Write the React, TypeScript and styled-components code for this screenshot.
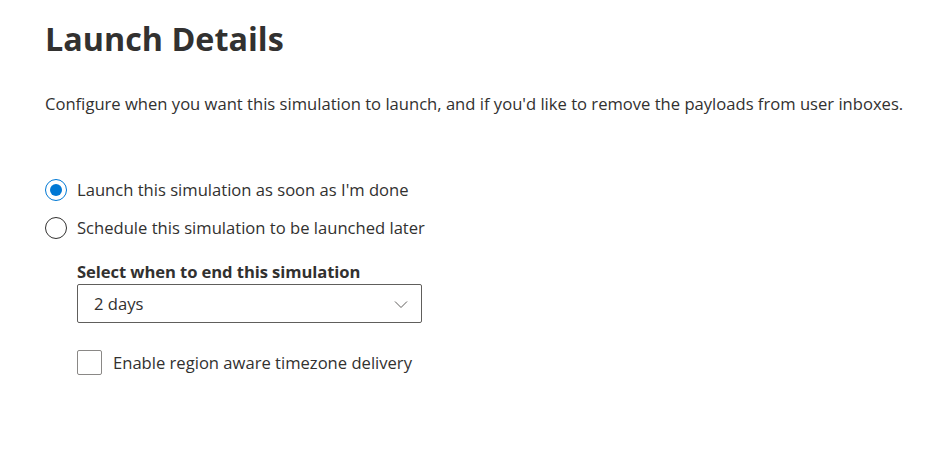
import React from "react";
import styled, { createGlobalStyle } from "styled-components";

const Global = createGlobalStyle`
  html, body { margin: 0; padding: 0; background: #ffffff; }
  body { font-family: "Open Sans", "Noto Sans", sans-serif; color: #323130; }
`;

const Page = styled.div`
  padding: 14px 0 0 45px;
  display: flex;
  flex-direction: column;
`;

const Title = styled.h1`
  margin: 0;
  font-size: 32.3px;
  font-weight: 700;
  line-height: 48px;
  color: #323130;
`;

const Description = styled.p`
  margin: 31px 0 0 0;
  font-size: 16.6px;
  line-height: 22px;
`;

const Options = styled.div`
  margin-top: 64px;
  display: flex;
  flex-direction: column;
  gap: 16px;
`;

const RadioRow = styled.label`
  display: flex;
  align-items: center;
  gap: 10px;
  font-size: 16.6px;
  line-height: 22px;
`;

const RadioCircle = styled.span<{ $checked?: boolean }>`
  box-sizing: border-box;
  width: 22px;
  height: 22px;
  border-radius: 50%;
  border: 1px solid ${(p) => (p.$checked ? "#0078d4" : "#323130")};
  display: flex;
  align-items: center;
  justify-content: center;
  &::after {
    content: "";
    width: 12px;
    height: 12px;
    border-radius: 50%;
    background: ${(p) => (p.$checked ? "#0078d4" : "transparent")};
  }
`;

const Nested = styled.div`
  margin: 22px 0 0 32px;
  display: flex;
  flex-direction: column;
`;

const FieldLabel = styled.div`
  font-size: 16.6px;
  font-weight: 700;
  line-height: 22px;
  letter-spacing: -0.08px;
`;

const Dropdown = styled.div`
  box-sizing: border-box;
  margin-top: 1px;
  width: 345px;
  height: 39px;
  border: 1px solid #605e5c;
  border-radius: 2px;
  display: flex;
  align-items: center;
  justify-content: space-between;
  padding: 0 12px 0 16px;
  font-size: 16.6px;
`;

const CheckRow = styled.label`
  margin-top: 27px;
  display: flex;
  align-items: center;
  gap: 11px;
  font-size: 16.6px;
  line-height: 22px;
`;

const CheckBox = styled.span`
  box-sizing: border-box;
  width: 25px;
  height: 25px;
  border: 1px solid #8a8886;
  border-radius: 2px;
`;

const Chevron = () => (
  <svg width="16" height="16" viewBox="0 0 16 16" fill="none">
    <path d="M2 5.5 L8 11.5 L14 5.5" stroke="#605e5c" strokeWidth="1" />
  </svg>
);

export default function App() {
  return (
    <>
      <Global />
      <Page>
        <Title>Launch Details</Title>
        <Description>
          Configure when you want this simulation to launch, and if you'd like to remove the payloads from user inboxes.
        </Description>
        <Options>
          <RadioRow>
            <RadioCircle $checked />
            Launch this simulation as soon as I'm done
          </RadioRow>
          <RadioRow>
            <RadioCircle />
            Schedule this simulation to be launched later
          </RadioRow>
        </Options>
        <Nested>
          <FieldLabel>Select when to end this simulation</FieldLabel>
          <Dropdown>
            <span>2 days</span>
            <Chevron />
          </Dropdown>
          <CheckRow>
            <CheckBox />
            Enable region aware timezone delivery
          </CheckRow>
        </Nested>
      </Page>
    </>
  );
}
